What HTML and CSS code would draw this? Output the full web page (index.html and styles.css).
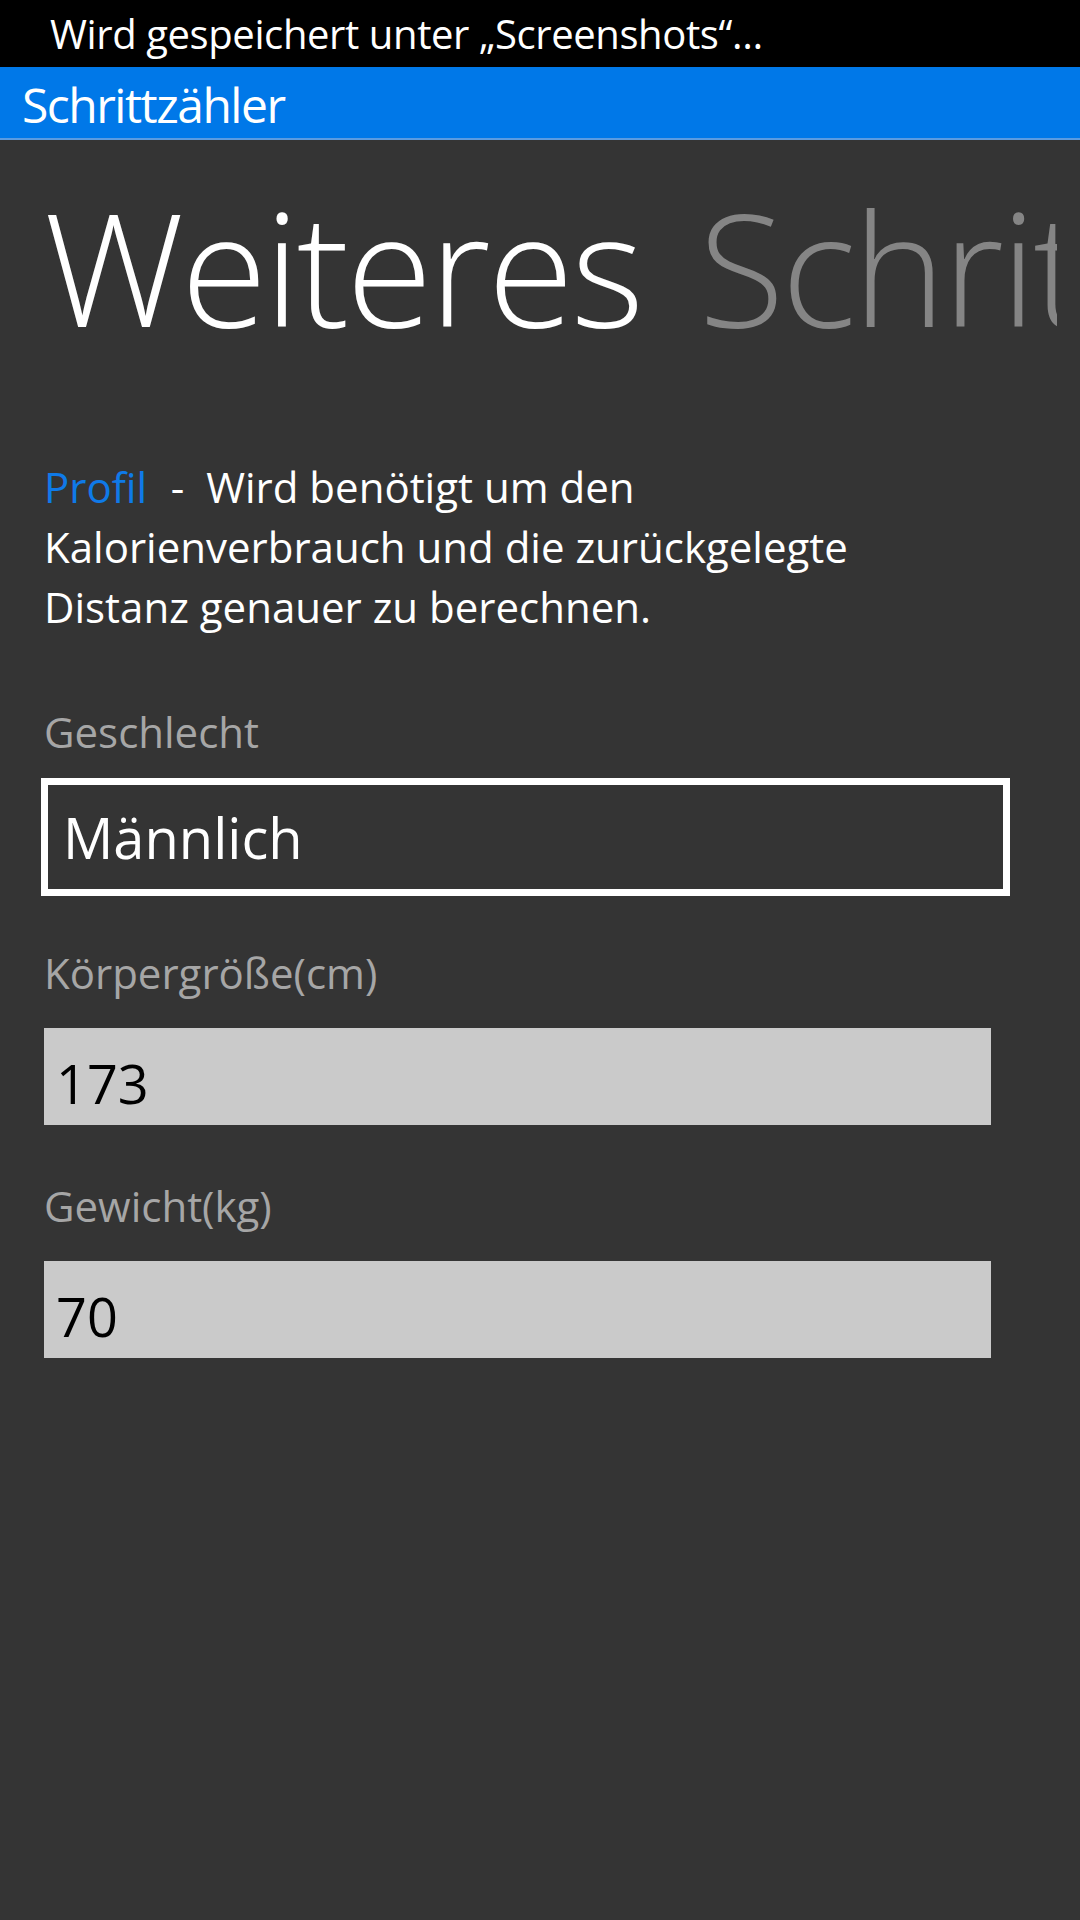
FILE: index.html
```html
<!DOCTYPE html>
<html lang="de">
<head>
    <meta charset="UTF-8">
    <meta name="viewport" content="width=device-width, initial-scale=1.0">
    <title>Schrittzähler</title>
    <link rel="stylesheet" href="styles.css">
</head>
<body>
    <div class="status-bar">Wird gespeichert unter „Screenshots“…</div>
    <div class="title-bar">Schrittzähler</div>

    <div class="pivot">
        <span class="pivot-item active">Weiteres</span>
        <span class="pivot-item">Schrittzähler</span>
    </div>

    <p class="intro">
        <span class="accent">Profil</span>&nbsp; <span class="sep">-</span>&nbsp; Wird benötigt um den<br>
        Kalorienverbrauch und die zurückgelegte<br>
        Distanz genauer zu berechnen.
    </p>

    <div class="profile-form">
        <div class="field">
            <div class="field-label">Geschlecht</div>
            <div class="picker">Männlich</div>
        </div>

        <div class="field field-height">
            <div class="field-label">Körpergröße(cm)</div>
            <div class="textbox">173</div>
        </div>

        <div class="field field-weight">
            <div class="field-label">Gewicht(kg)</div>
            <div class="textbox">70</div>
        </div>
    </div>
</body>
</html>
```

FILE: styles.css
```css
body {
    margin: 0;
    background-color: #343434;
    font-family: "Open Sans", "Noto Sans", sans-serif;
    color: #ffffff;
    width: 1080px;
    min-height: 1920px;
}
.status-bar {
    height: 67px;
    line-height: 67px;
    padding-left: 50px;
    background: #000000;
    font-size: 40px;
    letter-spacing: -0.4px;
    white-space: nowrap;
}
.title-bar {
    height: 67px;
    line-height: 67px;
    padding: 4px 0 0 22px;
    background: #0078e8;
    border-bottom: 2px solid #5b9be0;
    font-size: 48px;
    letter-spacing: -1.5px;
}
.pivot {
    margin: 46px 23px 0 44px;
    height: 160px;
    line-height: 160px;
    font-size: 157px;
    font-weight: 300;
    letter-spacing: -3px;
    white-space: nowrap;
    overflow: hidden;
}
.pivot-item {
    margin-right: 20px;
    color: #858585;
}
.pivot-item.active {
    color: #ffffff;
}
.intro {
    margin: 111px 0 0 44px;
    font-size: 42px;
    line-height: 60px;
}
.accent {
    color: #0f7ae8;
}
.sep {
    margin-left: 2px;
}
.profile-form {
    margin: 65px 0 0 44px;
}
.field-label {
    font-size: 42px;
    line-height: 60px;
    color: #a6a6a6;
}
.picker {
    margin: 16px 0 0 -3px;
    width: 940px;
    height: 104px;
    line-height: 104px;
    padding-left: 15px;
    border: 7px solid #ffffff;
    font-size: 56px;
}
.field-height {
    margin-top: 47px;
}
.field-weight {
    margin-top: 51px;
}
.textbox {
    margin-top: 25px;
    width: 935px;
    height: 83px;
    line-height: 83px;
    padding: 14px 0 0 12px;
    background: #cacaca;
    color: #000000;
    font-size: 54px;
}
```
